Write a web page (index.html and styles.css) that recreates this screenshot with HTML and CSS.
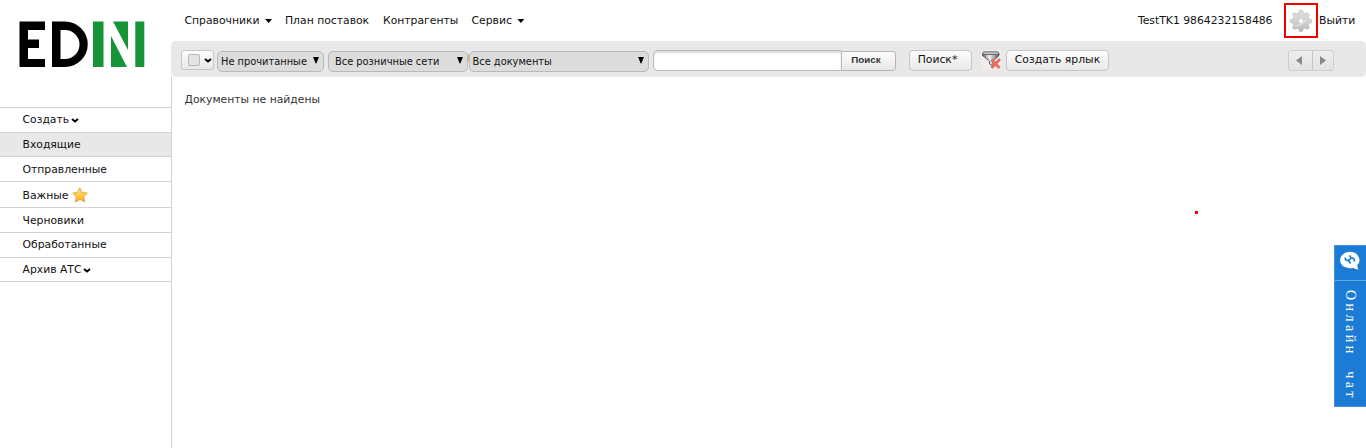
FILE: index.html
```html
<!DOCTYPE html>
<html lang="ru">
<head>
<meta charset="utf-8">
<title>EDIN</title>
<link rel="stylesheet" href="styles.css">
</head>
<body>
<aside class="sidebar">
  <a class="logo"><svg width="126" height="46" viewBox="0 0 126 46">
    <path d="M.500 .5H26V9H9V18.500H20V27H9V38H26V46H.500Z"/>
    <path fill-rule="evenodd" d="M33 .5H46A22.700 22.700 0 0 1 46 46H33ZM41.500 9V38H46A14.500 14.500 0 0 0 46 9Z"/>
    <path fill="#179338" d="M74 .5H84.500V46H74ZM94 .5H109V29ZM92 15L108 46H92ZM116.300 .5H125.300V46H116.300Z"/>
  </svg></a>
  <nav class="folders">
    <a class="folder">Создать<svg class="chev" width="8" height="5" viewBox="0 0 8 5"><path d="M1 1L4 3.500L7 1"/></svg></a>
    <a class="folder short active">Входящие</a>
    <a class="folder low">Отправленные</a>
    <a class="folder tall">Важные<svg class="star" width="16" height="16" viewBox="0 0 16 16"><defs><linearGradient id="gold" x2="0" y2="1"><stop offset="0" stop-color="#ffe36a"/><stop offset=".45" stop-color="#ffd24b"/><stop offset="1" stop-color="#fba52b"/></linearGradient></defs><path d="M7.700 .8L9.900 5.500L15.300 6L11.600 9.800L12.900 14.800L8 12.500L3.400 15L4.300 9.700L.7 6.200L5.600 5.400Z" fill="url(#gold)" stroke="#d99a3a" stroke-width=".8" stroke-linejoin="round"/></svg></a>
    <a class="folder low">Черновики</a>
    <a class="folder">Обработанные</a>
    <a class="folder short">Архив АТС<svg class="chev" width="8" height="5" viewBox="0 0 8 5"><path d="M1 1L4 3.500L7 1"/></svg></a>
  </nav>
</aside>
<main class="main">
  <header class="topbar">
    <a class="menu m1">Справочники<i class="caret"></i></a>
    <a class="menu m2">План поставок</a>
    <a class="menu m3">Контрагенты</a>
    <a class="menu">Сервис<i class="caret"></i></a>
    <span class="user">TestTK1 9864232158486</span>
    <span class="gear"><svg width="24" height="24" viewBox="0 0 24 24"><defs><linearGradient id="steel" x2="0" y2="1"><stop offset="0" stop-color="#dedede"/><stop offset=".55" stop-color="#d0d0d0"/><stop offset="1" stop-color="#b8b8b8"/></linearGradient></defs><path fill="url(#steel)" stroke="#c3c3c3" stroke-width=".7" stroke-linejoin="round" fill-rule="evenodd" d="M9.500 3.500L10.300 1.300H13.500L14.500 3.500V4.600H17L18.500 3.700L20.500 5.800L19.500 7.500V9.700L22.600 10.500V13.800L19.500 14.500V17L20.600 18.800L18.500 20.500L17 19.500H14.500L13.500 22.500H10.300L9.500 19.500H7L5.200 20.600L3.300 18.600L4.500 17V14.500L1.300 13.600V10.500L4.500 9.700V7.500L3.400 5.500L5.500 3.600L7 4.600H9.500ZM12 9.500A2.500 2.500 0 1 0 12 14.500A2.500 2.500 0 1 0 12 9.500Z"/><path d="M6 17Q12 17 18 10" fill="none" stroke="#ececec" stroke-opacity=".6" stroke-width="1.500"/></svg></span>
    <a class="exit">Выйти</a>
  </header>
  <section class="toolbar">
    <span class="btn check"><i class="box"></i><svg class="chev" width="8" height="5" viewBox="0 0 8 5"><path d="M1 1L4 3.500L7 1"/></svg></span>
    <span class="select s1"><b>Не прочитанные</b><i class="drop"></i></span>
    <span class="select s2"><b>Все розничные сети</b><i class="drop"></i></span>
    <i class="sliver"></i>
    <span class="select s3"><b>Все документы</b><i class="drop"></i></span>
    <input class="query" type="text" aria-label="Поиск">
    <span class="btn find">Поиск</span>
    <span class="btn ext">Поиск*</span>
    <svg class="funnel" width="20" height="20" viewBox="0 0 20 20"><defs><linearGradient id="metal"><stop offset="0" stop-color="#555a60"/><stop offset=".42" stop-color="#f2f4f5"/><stop offset="1" stop-color="#50555b"/></linearGradient></defs><rect width="20" height="20" fill="#efedec"/><path d="M1.500 3.500H18V5.500L12 11V16L8.500 14V11L1.500 5.500Z" fill="url(#metal)" stroke="#4a4f55" stroke-width=".9"/><path d="M2.500 1.800H17L18 4.500H1.500Z" fill="#bfc4ca" stroke="#555a60" stroke-width=".8"/><path d="M10.500 9.500L18.500 18M19 9L10.500 18" stroke="#ec6a59" stroke-width="2.800"/></svg>
    <span class="btn label">Создать ярлык</span>
    <span class="pager"><i class="step"><svg width="6" height="9" viewBox="0 0 6 9"><path d="M6 0V9L0 4.500Z"/></svg></i><i class="step next"><svg width="6" height="9" viewBox="0 0 6 9"><path d="M0 0V9L6 4.500Z"/></svg></i></span>
  </section>
  <section class="content">Документы не найдены</section>
</main>
<i class="dot"></i>
<div class="chat">
  <div class="chat-icon"><svg width="20" height="20" viewBox="0 0 20 20"><path d="M9.800 .8A9.600 8.200 0 1 0 13 16.700Q15 18 18.500 18.600Q17 16.500 17.400 14A9.600 8.200 0 0 0 9.800 .8Z" fill="#fff"/><path d="M5.300 6.500Q5 9.500 7.500 9.500Q9 9.500 9.800 8.300T12.500 7Q14.800 7.300 14.300 10.500M9.500 4.500L11 6.500M9 10L10.500 12.500" fill="none" stroke="#1c7bd5" stroke-width="1.700"/></svg></div>
  <div class="chat-text">Онлайн чат</div>
</div>
</body>
</html>
```

FILE: styles.css
```css
* { box-sizing: border-box; }
body { margin: 0; height: 448px; display: flex; overflow: hidden; position: relative; background: #fff; color: #111; font: 10.800px/14px "DejaVu Sans", sans-serif; }
svg { display: block; flex: none; }
.sidebar { width: 171px; flex: none; }
.logo { display: block; height: 107px; padding: 21px 0 0 19px; }
.folders { border-top: 1px solid #d2d2d2; }
.folder { display: flex; align-items: center; height: 25px; padding: 0 0 1px 22.500px; border-bottom: 1px solid #d2d2d2; }
.short { height: 24px; padding-bottom: 0; }
.tall { height: 26px; padding: 2px 0 0 22.500px; }
.low { padding-top: 1px; padding-bottom: 0; }
.active { background: #e8e8e8; }
.chev { fill: none; stroke: #000; stroke-width: 2; }
.folder .chev { margin: 1px 0 0 2px; }
.star { margin: -2px 0 0 4px; }
.main { flex: 1; display: flex; flex-direction: column; }
.topbar { height: 41px; display: flex; align-items: center; padding-left: 13.500px; white-space: nowrap; }
.menu { display: flex; align-items: center; }
.m1 { width: 100.500px; }
.m2 { width: 98px; }
.m3 { width: 88.500px; }
.caret { width: 7px; height: 4px; margin: 1px 0 0 5.500px; background: #000; clip-path: polygon(0 0, 100% 0, 50% 100%); }
.user { margin-left: auto; }
.gear { width: 34px; height: 35px; margin-left: 11.500px; padding: 4px 0 0 3px; border: 2px solid #f00000; }
.exit { width: 48px; padding-left: 1px; }
.toolbar { height: 36px; display: flex; align-items: flex-start; padding: 9px 0 0 10px; background: #e8e8e8; border-radius: 5px; white-space: nowrap; }
.content { flex: 1; margin-top: -1px; padding: 17px 0 0 12.500px; border-left: 1px solid #d2d2d2; color: #333; }
.btn { height: 21px; flex: none; border: 1px solid #c6c6c6; border-radius: 4px; background: linear-gradient(#fdfdfd, #e8e8e8); text-align: center; line-height: 18px; }
.check { width: 33px; height: 20px; display: flex; align-items: center; padding-left: 6px; border-radius: 3px; }
.box { width: 12px; height: 12px; margin-right: 4px; border: 1px solid #b8b8b8; border-radius: 2px; background: #e4e4e4; }
.select { display: flex; align-items: center; height: 21px; margin-top: 1px; flex: none; border: 1px solid #b9b9b9; border-radius: 5px; background: #dcdcdc; padding: 0 4px 0 3px; font: 10.950px/14px "DejaVu Sans Condensed", "DejaVu Sans", sans-serif; font-stretch: condensed; }
.select b { flex: 1; font-weight: normal; }
.drop { width: 6px; height: 7px; margin-top: -2px; background: #000; clip-path: polygon(0 0, 100% 0, 50% 100%); }
.s1 { width: 107px; margin-left: 3px; }
.s2 { width: 140px; margin-left: 4px; padding-left: 6px; }
.s3 { width: 180px; padding-left: 2.500px; }
.sliver { width: 1px; height: 7px; margin-top: 4px; background: #efb660; }
.query { width: 188px; height: 21px; margin: 0 0 0 4px; border: 1px solid #b9b9b9; border-right: 0; border-radius: 5px 0 0 5px; background: #fff; box-shadow: inset 0 2px 2px #ddd; }
.find { width: 55px; height: 20px; margin-top: 1px; padding-right: 5px; border-color: #b5b5b5; border-radius: 0 3px 3px 0; color: #333; font: bold 9.750px/16px "Liberation Sans", sans-serif; }
.ext { width: 63px; margin-left: 13px; padding-right: 6px; }
.funnel { margin-left: 9px; }
.label { width: 103px; margin-left: 5px; }
.pager { display: flex; width: 46px; height: 21px; margin-left: 179px; border: 1px solid #cdcdcd; border-radius: 3px; background: linear-gradient(#ededed, #e3e3e3); }
.step { flex: 1; display: flex; align-items: center; justify-content: center; padding: 0 2px 1px 0; fill: #888; }
.next { padding: 0 0 1px; border-left: 1px solid #c6c6c6; }
.dot { position: absolute; left: 1195px; top: 211px; width: 3px; height: 3px; background: #f00; }
.chat { position: absolute; right: 0; top: 245px; width: 32px; height: 162px; background: #1c7bd5; border: 1px solid #4492db; border-right: 0; }
.chat-icon { height: 35px; padding: 5px 0 0 5px; border-bottom: 1px solid #65aae5; }
.chat-text { writing-mode: vertical-rl; width: 31px; height: 125px; padding-top: 9px; color: #fff; font: 14px/31px "Liberation Serif", serif; letter-spacing: 3.500px; word-spacing: 7.500px; white-space: nowrap; }
```
